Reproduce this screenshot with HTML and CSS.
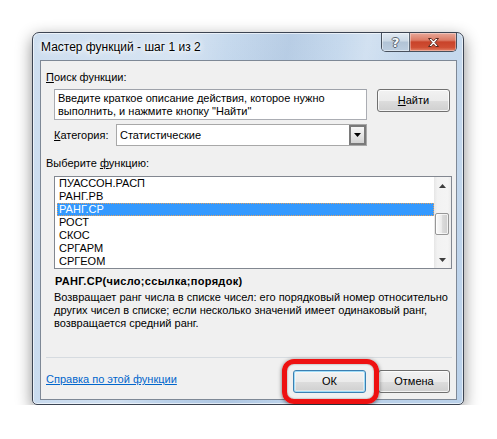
FILE: index.html
```html
<!DOCTYPE html>
<html lang="ru">
<head>
<meta charset="utf-8">
<title>Мастер функций</title>
<link rel="stylesheet" href="styles.css">
</head>
<body>
<div class="stage">
  <div class="window">
    <div class="titlebar">
      <div class="title">Мастер функций - шаг 1 из 2</div>
      <div class="caption-btns">
        <div class="cbtn help"><span class="qmark">?</span></div>
        <div class="cbtn close">
          <svg width="13" height="11" viewBox="0 0 13 11"><path d="M1.5 1.5h2.8l2.2 2.4 2.2-2.4h2.8l-3.5 4 3.5 4h-2.8l-2.2-2.4-2.2 2.4h-2.8l3.5-4z" fill="#fff" stroke="#5a2a20" stroke-width="1" stroke-linejoin="round"/></svg>
        </div>
      </div>
    </div>
    <div class="client">
      <div class="label"><u>П</u>оиск функции:</div>
      <div class="search-row">
        <div class="textbox">Введите краткое описание действия, которое нужно<br>выполнить, и нажмите кнопку "Найти"</div>
        <div class="btn find"><u>Н</u>айти</div>
      </div>
      <div class="cat-row">
        <div class="cat-label"><u>К</u>атегория:</div>
        <div class="combo">
          <span class="combo-text">Статистические</span>
          <span class="combo-btn"><svg width="7" height="4" viewBox="0 0 7 4"><path d="M0 0h7L3.5 4z" fill="#000"/></svg></span>
        </div>
      </div>
      <div class="label label2">Выберите <u>ф</u>ункцию:</div>
      <div class="listbox">
        <div class="items">
          <div class="item">ПУАССОН.РАСП</div>
          <div class="item">РАНГ.РВ</div>
          <div class="item selected">РАНГ.СР</div>
          <div class="item">РОСТ</div>
          <div class="item">СКОС</div>
          <div class="item">СРГАРМ</div>
          <div class="item">СРГЕОМ</div>
        </div>
        <div class="scrollbar">
          <div class="sb-btn"><svg width="7" height="4" viewBox="0 0 7 4"><path d="M3.5 0L7 4H0z" fill="#3d3d3d"/></svg></div>
          <div class="sb-track"><div class="sb-thumb"></div></div>
          <div class="sb-btn"><svg width="7" height="4" viewBox="0 0 7 4"><path d="M0 0h7L3.5 4z" fill="#3d3d3d"/></svg></div>
        </div>
      </div>
      <div class="sig">РАНГ.СР(число;ссылка;порядок)</div>
      <div class="desc">Возвращает ранг числа в списке чисел: его порядковый номер относительно<br>других чисел в списке; если несколько значений имеет одинаковый ранг,<br>возвращается средний ранг.</div>
      <div class="sep"></div>
      <div class="bottom-row">
        <a class="help-link" href="#">Справка по этой функции</a>
        <div class="btn ok">ОК</div>
        <div class="btn cancel">Отмена</div>
      </div>
    </div>
    <div class="highlight"></div>
  </div>
</div>
</body>
</html>
```

FILE: styles.css
```css
* { box-sizing: border-box; }
html, body { margin: 0; background: #fff; }
body {
  font-family: "Liberation Sans", Arial, sans-serif;
  font-size: 11px;
  color: #000;
}
.stage { padding: 32px 0 0 32px; }

.window {
  position: relative;
  width: 432px;
  height: 373px;
  border: 1px solid #3c4452;
  border-radius: 7px 7px 5px 5px;
  padding: 0 6px 4px 7px;
  background:
    linear-gradient(100deg, rgba(255,255,255,.15) 0%, rgba(255,255,255,.3) 30%, rgba(255,255,255,0) 40%, rgba(120,150,190,.18) 52%, rgba(255,255,255,0) 62%, rgba(255,255,255,.22) 68%, rgba(255,255,255,0) 76%),
    linear-gradient(180deg, #c6d9ed 0%, #bad1ea 100%);
  box-shadow: inset 0 0 0 1px rgba(255,255,255,.6), 0 5px 16px rgba(0,0,0,.45);
}

.titlebar {
  height: 27px;
  display: flex;
  align-items: flex-start;
  padding-left: 1px;
}
.title {
  margin-top: 7px;
  font-size: 12px;
  line-height: 15px;
  text-shadow: 0 0 6px #fff, 0 0 3px #fff, 0 0 10px rgba(255,255,255,.8);
}
.caption-btns {
  margin-left: auto;
  display: flex;
  height: 19px;
  border: 1px solid #47505d;
  border-top: none;
  border-radius: 0 0 5px 5px;
  overflow: hidden;
}
.cbtn {
  display: flex;
  align-items: center;
  justify-content: center;
  height: 100%;
}
.help {
  width: 28px;
  border-right: 1px solid #5d6774;
  background: linear-gradient(180deg, #e2eaf3 0%, #cbd8e5 45%, #b1c3d6 50%, #bccddf 100%);
  box-shadow: inset 0 0 0 1px rgba(255,255,255,.45);
}
.qmark {
  font-family: "DejaVu Sans", sans-serif;
  font-weight: bold;
  font-size: 13px;
  line-height: 13px;
  color: #f4f7fa;
  text-shadow: -1px 0 #5a6470, 1px 0 #5a6470, 0 -1px #5a6470, 0 1px #5a6470;
}
.close {
  width: 46px;
  background: linear-gradient(180deg, #e8a899 0%, #dc7b65 40%, #c9432a 50%, #cf4e33 80%, #e3846a 100%);
  box-shadow: inset 0 0 0 1px rgba(255,255,255,.35);
}

.client {
  height: 340px;
  border: 1px solid #7e8896;
  background: #f0f0f0;
  padding: 0 4px 0 5px;
  display: flex;
  flex-direction: column;
}
.label {
  margin-top: 9px;
  height: 15px;
  line-height: 15px;
}
.label2 { margin-top: 10px; }

.search-row {
  display: flex;
  margin: 4px 0 0 8px;
  align-items: flex-start;
}
.textbox {
  width: 313px;
  height: 31px;
  border: 1px solid #abadb3;
  border-top-color: #9ea2aa;
  background: #fff;
  padding: 2px 0 0 3px;
  line-height: 13px;
}
.btn {
  height: 23px;
  border: 1px solid #707070;
  border-radius: 3px;
  background: linear-gradient(180deg, #f2f2f2 0%, #ebebeb 50%, #dddddd 51%, #cfcfcf 100%);
  box-shadow: inset 0 0 0 1px rgba(255,255,255,.75);
  display: flex;
  align-items: center;
  justify-content: center;
  line-height: 15px;
}
.find {
  width: 73px;
  margin-left: 10px;
}

.cat-row {
  display: flex;
  align-items: center;
  margin: 4px 0 0 8px;
}
.cat-label { width: 62px; }
.combo {
  width: 251px;
  height: 22px;
  border: 1px solid #a8a8a8;
  background: #fff;
  display: flex;
  align-items: center;
}
.combo-text {
  flex: 1;
  padding-left: 3px;
}
.combo-btn {
  width: 17px;
  height: 20px;
  border: 2px solid #7a7a7a;
  background: linear-gradient(180deg, #f7f7f7 0%, #e6e6e6 50%, #d2d2d2 100%);
  display: flex;
  align-items: center;
  justify-content: center;
}

.listbox {
  margin: 5px 0 0 8px;
  width: 398px;
  height: 93px;
  border: 1px solid #828790;
  background: #fff;
  display: flex;
  overflow: hidden;
}
.items {
  flex: 1;
  padding-left: 2px;
}
.item {
  height: 13px;
  line-height: 13px;
  padding-left: 2px;
  white-space: nowrap;
}
.item.selected {
  background: #3399ff;
  color: #fff;
  outline: 1px dotted #e0a060;
  outline-offset: -1px;
}
.scrollbar {
  width: 17px;
  display: flex;
  flex-direction: column;
  background: linear-gradient(90deg, #e6e6e6 0%, #f2f2f2 20%, #f4f4f4 80%, #ececec 100%);
}
.sb-btn {
  height: 17px;
  display: flex;
  align-items: center;
  justify-content: center;
}
.sb-track {
  flex: 1;
  padding-top: 19px;
}
.sb-thumb {
  margin-left: 1px;
  width: 14px;
  height: 22px;
  border: 1px solid #979797;
  border-radius: 2px;
  background: linear-gradient(90deg, #fafafa 0%, #ececec 45%, #dadada 55%, #cfcfcf 100%);
  box-shadow: inset 0 0 0 1px rgba(255,255,255,.7);
}

.sig {
  margin: 5px 0 0 9px;
  font-weight: bold;
  line-height: 15px;
  letter-spacing: 0.3px;
  white-space: nowrap;
}
.desc {
  margin: 2px 0 0 8px;
  line-height: 13px;
  white-space: nowrap;
}
.sep {
  margin-top: 27px;
  height: 1px;
  background: #d6dbe0;
}
.bottom-row {
  display: flex;
  align-items: flex-start;
  margin-top: 12px;
  padding-right: 2px;
}
.help-link {
  margin-top: 2px;
  line-height: 15px;
  color: #0066cc;
  text-decoration: underline;
}
.ok {
  margin-left: auto;
  width: 73px;
  border-color: #3c7fb1;
  box-shadow: inset 0 0 0 1px #9fdcf8, inset 0 0 0 2px rgba(255,255,255,.4);
}
.cancel {
  width: 72px;
  margin-left: 12px;
}

.highlight {
  position: absolute;
  left: 249px;
  top: 326px;
  width: 97px;
  height: 45px;
  border: 5px solid #ee1111;
  border-radius: 12px;
  box-shadow: 0 1px 4px rgba(0,0,0,.55), inset 0 0 2px rgba(0,0,0,.45);
}
```
